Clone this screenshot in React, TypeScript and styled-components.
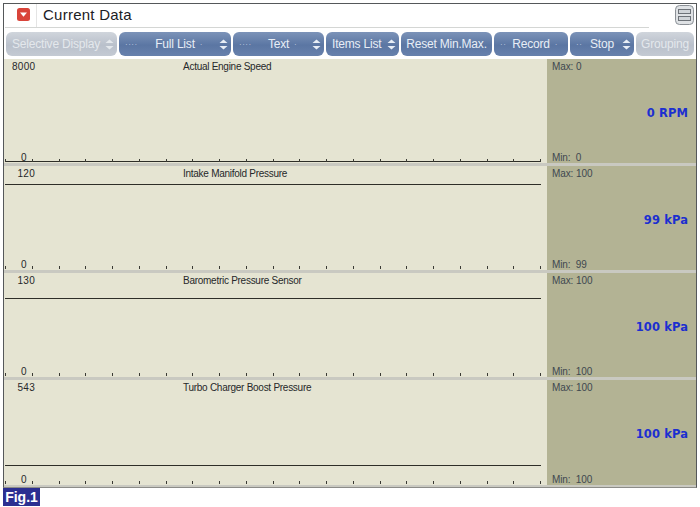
import React from 'react';
import styled, { createGlobalStyle } from 'styled-components';

const GlobalStyle = createGlobalStyle`
  html, body { margin: 0; padding: 0; background: #fff; }
  body { font-family: "Liberation Sans", Arial, sans-serif; }
`;

const Page = styled.div`
  width: 700px;
  height: 507px;
  padding: 3px 0 0 3px;
  box-sizing: border-box;
  overflow: hidden;
`;

const Frame = styled.div`
  width: 694px;
  height: 485px;
  box-sizing: border-box;
  border: 1px solid #55585a;
  border-bottom-color: #8c8c88;
  display: flex;
  flex-direction: column;
`;

const HeaderBar = styled.div`
  position: relative;
`;

const Header = styled.header`
  height: 24px;
  box-sizing: border-box;
  margin: 0 47px 0 1px;
  display: flex;
  align-items: center;
  border-bottom: 1px solid #d4d6d4;
`;

const IconCell = styled.div`
  width: 32px;
  height: 23px;
  display: flex;
  align-items: center;
  justify-content: center;
  padding: 0 0 2px 5px;
  box-sizing: border-box;
  border-right: 1px solid #e4e4e4;
`;

const Title = styled.h1`
  margin: 0 0 2px 6px;
  font-size: 15px;
  font-weight: 400;
  color: #1c2024;
  letter-spacing: 0.25px;
`;

const MenuIcon = styled.div`
  position: absolute;
  top: 1px;
  right: 2px;
`;

const Toolbar = styled.nav`
  height: 24px;
  margin-top: 4px;
  padding-left: 2px;
  display: flex;
  gap: 2px;
`;

const Button = styled.div<{ $w: number; $off?: boolean; $dotted?: boolean; $arrows?: boolean }>`
  width: ${(p) => p.$w}px;
  height: 24px;
  box-sizing: border-box;
  padding: 0 3px 0 ${(p) => (p.$dotted ? 3 : p.$arrows ? 6 : 3)}px;
  border-radius: 6px;
  display: ${(p) => (p.$dotted ? 'grid' : 'flex')};
  grid-template-columns: 1fr auto 1fr;
  align-items: center;
  justify-content: ${(p) => (p.$arrows ? 'flex-start' : 'center')};
  gap: ${(p) => (p.$dotted ? 2 : 4)}px;
  font-size: 12px;
  letter-spacing: -0.2px;
  white-space: nowrap;
  color: ${(p) => (p.$off ? '#e4e8ec' : '#e8eef6')};
  background: ${(p) =>
    p.$off
      ? 'linear-gradient(#d0d5dc, #b9c0cb 55%, #c4cad3)'
      : 'linear-gradient(#7c93b8, #5b76a3 55%, #6781ac)'};
`;

const Dots = styled.span`
  color: #c8d3e4;
  font-size: 8px;
  letter-spacing: 0.5px;
  padding-left: 3px;
`;

const ButtonEnd = styled.span`
  display: flex;
  align-items: center;
  justify-content: space-between;
  gap: 2px;
`;

const Rows = styled.main`
  margin-top: 3px;
  flex: 1;
  display: flex;
  flex-direction: column;
  gap: 3px;
  background: #c9c9c1;
  min-height: 0;
`;

const Row = styled.section<{ $h: number }>`
  height: ${(p) => p.$h}px;
  display: grid;
  grid-template-columns: 543px 1fr;
  flex: none;
`;

const Chart = styled.div`
  position: relative;
  background: #e5e4d2;
  font-size: 10px;
  color: #26282a;
`;

const ChartTop = styled.div`
  display: grid;
  grid-template-columns: 23px 1fr;
  column-gap: 148px;
  padding: 3px 0 0 8px;
  line-height: 10px;
`;

const MaxScale = styled.span`
  text-align: right;
  letter-spacing: 0.3px;
  white-space: nowrap;
`;

const ChartName = styled.span`
  letter-spacing: -0.27px;
`;

const Zero = styled.span`
  position: absolute;
  left: 17px;
  bottom: 0;
  line-height: 10px;
`;

const Plot = styled.svg`
  position: absolute;
  inset: 0;
  width: 100%;
  height: 100%;
`;

const Side = styled.div`
  background: #b3b394;
  display: flex;
  flex-direction: column;
  justify-content: space-between;
  padding: 3px 8px 0 5px;
  font-size: 10px;
  line-height: 10px;
  letter-spacing: -0.1px;
  color: #3e4850;
`;

const Value = styled.div`
  text-align: right;
  font-family: "DejaVu Sans", Verdana, sans-serif;
  font-weight: 700;
  font-size: 11.5px;
  line-height: 14px;
  letter-spacing: 0.1px;
  color: #1c2fd0;
`;

const Fig = styled.div`
  width: 37px;
  height: 18px;
  background: #2b2f91;
  color: #fff;
  font-weight: 700;
  font-size: 14px;
  line-height: 18px;
  text-align: center;
`;

const Updown = () => (
  <svg width="9" height="11" viewBox="0 0 9 11" style={{ flex: 'none', marginLeft: 'auto' }}>
    <path d="M4.5 0.5 L8.5 4 H0.5 Z M0.5 7 H8.5 L4.5 10.5 Z" fill="currentColor" />
  </svg>
);

const ticks = Array.from({ length: 21 }, (_, i) => Math.round(1 + i * 26.75) + 0.5);

const rows = [
  { h: 104, max: '8000', name: 'Actual Engine Speed', line: 102.5, sideMax: '0', sideMin: '0', value: '0 RPM' },
  { h: 104, max: '120', name: 'Intake Manifold Pressure', line: 18.5, sideMax: '100', sideMin: '99', value: '99 kPa' },
  { h: 104, max: '130', name: 'Barometric Pressure Sensor', line: 25.5, sideMax: '100', sideMin: '100', value: '100 kPa' },
  { h: 105, max: '543', name: 'Turbo Charger Boost Pressure', line: 85.5, sideMax: '100', sideMin: '100', value: '100 kPa' },
];

const buttons = [
  { t: 'Selective Display', w: 111, off: true, arrows: true },
  { t: 'Full List', w: 112, dots: '····', arrows: true },
  { t: 'Text', w: 91, dots: '····', arrows: true },
  { t: 'Items List', w: 73, arrows: true },
  { t: 'Reset Min.Max.', w: 91 },
  { t: 'Record', w: 74, dots: '··' },
  { t: 'Stop', w: 64, dots: '··', arrows: true },
  { t: 'Grouping', w: 58, off: true },
];

export default function App() {
  return (
    <Page>
      <GlobalStyle />
      <Frame>
        <HeaderBar>
          <Header>
            <IconCell>
              <svg width="13" height="13" viewBox="0 0 13 13">
                <rect width="13" height="13" rx="2.5" fill="#d9443a" />
                <path d="M3 4.5 H10 L6.5 8.8 Z" fill="#fff" />
              </svg>
            </IconCell>
            <Title>Current Data</Title>
          </Header>
          <MenuIcon>
            <svg width="19" height="20" viewBox="0 0 19 20">
              <rect x="0.5" y="0.5" width="18" height="19" rx="4" fill="#dfe2e5" stroke="#8b9096" />
              <rect x="3.5" y="4.5" width="12" height="4" fill="#d0d4d8" stroke="#6d7278" />
              <rect x="3.5" y="11.5" width="12" height="4" fill="#d0d4d8" stroke="#6d7278" />
            </svg>
          </MenuIcon>
        </HeaderBar>
        <Toolbar>
          {buttons.map((b) => (
            <Button key={b.t} $w={b.w} $off={b.off} $dotted={!!b.dots} $arrows={b.arrows}>
              {b.dots && <Dots>{b.dots}</Dots>}
              <span>{b.t}</span>
              {b.dots ? (
                <ButtonEnd>
                  {b.w > 70 && <Dots>·</Dots>}
                  {b.arrows && <Updown />}
                </ButtonEnd>
              ) : (
                b.arrows && <Updown />
              )}
            </Button>
          ))}
        </Toolbar>
        <Rows>
          {rows.map((r) => (
            <Row key={r.name} $h={r.h}>
              <Chart>
                <Plot>
                  <line x1="1" x2="537" y1={r.line} y2={r.line} stroke="#2e2e28" strokeWidth="1" />
                  {ticks.map((x) => (
                    <line key={x} x1={x} x2={x} y1={r.h - 4} y2={r.h - 1} stroke="#3a3a34" strokeWidth="1" />
                  ))}
                </Plot>
                <ChartTop>
                  <MaxScale>{r.max}</MaxScale>
                  <ChartName>{r.name}</ChartName>
                </ChartTop>
                <Zero>0</Zero>
              </Chart>
              <Side>
                <span>Max: {r.sideMax}</span>
                <Value>{r.value}</Value>
                <span>Min:&nbsp; {r.sideMin}</span>
              </Side>
            </Row>
          ))}
        </Rows>
      </Frame>
      <Fig>Fig.1</Fig>
    </Page>
  );
}
